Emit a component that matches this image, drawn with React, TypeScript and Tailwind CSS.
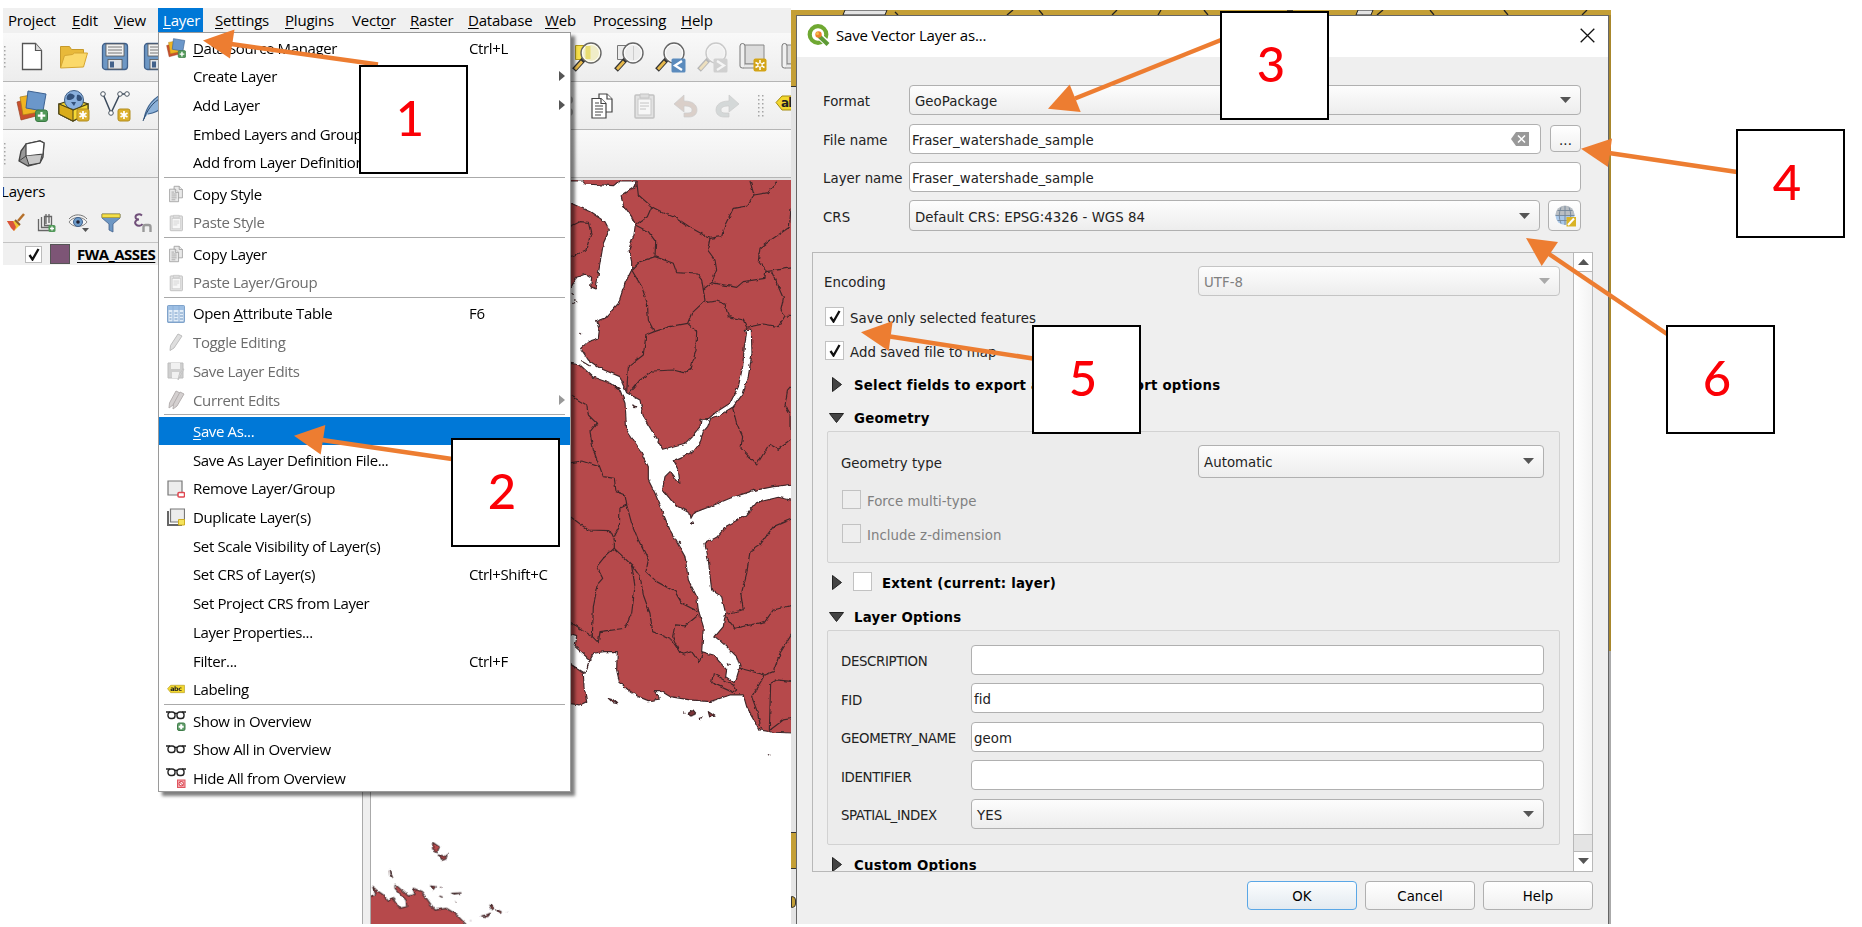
import React from "react";

type IconProps = { className?: string };

/* Text with an underlined mnemonic letter, marked by "&" */
function Mnemonic({ text }: { text: string }) {
  const i = text.indexOf("&");
  if (i < 0) return <>{text}</>;
  return (
    <>
      {text.slice(0, i)}
      <span className="underline decoration-1 underline-offset-2">{text[i + 1]}</span>
      {text.slice(i + 2)}
    </>
  );
}

/* ---------- icons ---------- */

const NewIcon = () => (
  <svg className="h-[30px] w-[30px]" viewBox="0 0 30 30">
    <path d="M5.500 1.500h13l6 7v19h-19z" fill="#fff" stroke="#555" strokeWidth="1.300" />
    <path d="M18.500 1.500v7h6" fill="#ddd" stroke="#555" strokeWidth="1.200" />
  </svg>
);
const FolderIcon = () => (
  <svg className="h-[30px] w-[30px]" viewBox="0 0 30 30">
    <path d="M1.500 26V4.500h9l2 3h12V12" fill="#e8b93a" stroke="#c79a2b" />
    <path d="M1.500 26l4-12.500 8-1 2-1.500h13L24.500 25z" fill="#fbd96a" stroke="#d5a632" />
  </svg>
);
const SaveIcon = () => (
  <svg className="h-[30px] w-[30px]" viewBox="0 0 30 30">
    <rect x="2.500" y="1.500" width="25" height="26" rx="3" fill="#6d97c4" stroke="#41618b" strokeWidth="1.300" />
    <rect x="6" y="2" width="18" height="12" fill="#f1f1f1" stroke="#555" strokeWidth=".8" />
    <path d="M8 5h14M8 8h14M8 11h14" stroke="#777" />
    <rect x="8" y="17.500" width="14" height="9.500" fill="#dfe3e8" stroke="#555" strokeWidth=".8" />
    <rect x="10" y="19.500" width="4" height="6" fill="#41618b" />
  </svg>
);
const SourceIcon = ({ className = "h-[32px] w-[32px]" }: IconProps) => (
  <svg className={className} viewBox="0 0 32 32">
    <path d="M1 12l15-4 4 18-15 4z" fill="#c9502e" stroke="#99401f" strokeWidth=".7" />
    <path d="M4 7l16-3 3 18-16 3z" fill="#f0b422" stroke="#a67b16" strokeWidth=".7" />
    <path d="M12 1l18 3-3 17-17-3z" fill="#6b97ca" stroke="#3d6292" />
    <rect x="19.500" y="20" width="12" height="11.500" rx="2.500" fill="#52995a" stroke="#397a42" />
    <path d="M25.500 22v7.500M21.800 25.700h7.500" stroke="#fff" strokeWidth="2.200" />
  </svg>
);
const YellowStar = ({ x, y }: { x: number; y: number }) => (
  <g transform={`translate(${x} ${y})`}>
    <rect width="12" height="12" rx="2" fill="#dcb02c" stroke="#b18d20" />
    <path d="M6 2v8M2.500 4l7 4M9.500 4l-7 4" stroke="#fff" strokeWidth="1.700" />
  </g>
);
const BoxIcon = () => (
  <svg className="h-[32px] w-[32px]" viewBox="0 0 32 32">
    <path d="M1 14l15-5 14 5v9l-15 8L1 24z" fill="#f3d22e" stroke="#4d4518" strokeWidth="1.200" />
    <circle cx="16" cy="10" r="9.500" fill="#8ab0dd" stroke="#3d5d85" />
    <path d="M9 6c3-4 5-2 7-1s-1 5-4 5-4 0-3-4zM19 5c3-1 5 2 5 4s-4 3-5 1 0-3 0-5zM13 12h5l-2 4z" fill="#33517a" />
    <path d="M1 14l14 6 15-6v9l-15 8L1 24z" fill="#f6d934" stroke="#4d4518" strokeWidth="1.200" />
    <path d="M1 14l14 6v11L1 24z" fill="#d9ac1b" stroke="#4d4518" />
    <YellowStar x={19} y={19} />
  </svg>
);
const VectorIcon = () => (
  <svg className="h-[32px] w-[32px]" viewBox="0 0 32 32">
    <path d="M4 4l8 19 9-19h8" fill="none" stroke="#3b4a5c" strokeWidth="1.500" />
    <g fill="#fff" stroke="#4a5560">
      <circle cx="4" cy="4" r="2.300" />
      <circle cx="12" cy="23" r="2.300" />
      <circle cx="21" cy="4" r="2.300" />
      <circle cx="28" cy="4" r="2.300" />
    </g>
    <YellowStar x={19} y={19} />
  </svg>
);
const FeatherIcon = () => (
  <svg className="h-[32px] w-[32px]" viewBox="0 0 32 32">
    <path d="M3 29C5 18 12 7 26 2c0 12-6 20-19 22" fill="#8db2d9" stroke="#3f648f" strokeWidth="1.200" />
    <path d="M2 31C6 20 12 12 20 8" fill="none" stroke="#2b4a6e" />
  </svg>
);
const MeshIcon = () => (
  <svg className="h-[28px] w-[28px]" viewBox="0 0 28 28">
    <path d="M9 4l14-3 4 2-1 14-3 6-12 3-9-5 2-10z" fill="#999" stroke="#444" strokeWidth="1.300" />
    <path d="M9 4l14-3 4 2-1 11-17 2z" fill="#fff" stroke="#444" strokeWidth="1.200" />
    <path d="M9 16l-7 5M9 16l3 9 11-2 2-8" fill="#c9c9c9" stroke="#444" />
  </svg>
);
type LensKind = "selection" | "layer" | "last" | "next";
const ZoomIcon = ({ kind }: { kind: LensKind }) => (
  <svg className={kind === "next" ? "h-[32px] w-[32px] opacity-30" : "h-[32px] w-[32px]"} viewBox="0 0 32 32">
    {kind === "selection" && <path d="M4.500 4.500h12v14h-12z" fill="#f7e04b" stroke="#b59d1c" />}
    {kind === "layer" && <path d="M4.500 4.500h12v14h-12z" fill="#ececec" stroke="#777" />}
    <path d="M13 18L3 29" stroke="#333" strokeWidth="5" />
    <path d="M11 20.500L4 28.200" stroke="#e7b94b" strokeWidth="2.800" />
    <circle cx="20" cy="12" r="10" fill={kind === "selection" ? "#f0edc8" : "#ededed"} stroke="#666" strokeWidth="1.400" />
    <circle cx="20" cy="12" r="8.500" fill="none" stroke="#fff" />
    {kind === "selection" && <path d="M17 5v13" stroke="#e8dc72" strokeWidth="5" />}
    {kind === "layer" && <path d="M20.500 5v14" stroke="#ccc" />}
    {(kind === "last" || kind === "next") && (
      <>
        <rect x="17.500" y="17.500" width="14" height="14" rx="1.500" fill={kind === "last" ? "#5b8bbd" : "#888"} />
        <path d={kind === "last" ? "M28 20l-7 4.500 7 4.500" : "M21 20l7 4.500-7 4.500"} fill="none" stroke="#fff" strokeWidth="2.300" />
      </>
    )}
  </svg>
);
const ScrollIcon = () => (
  <svg className="h-[32px] w-[32px]" viewBox="0 0 32 32">
    <path d="M6 4h21v19H6z" fill="#dcdcdc" stroke="#888" />
    <path d="M3 5q0-2.500 2.500-2.500T8 5v20q0 2-2.500 2T3 25z" fill="#f0f0f0" stroke="#777" />
    <path d="M6 27h18v-4H8" fill="#e8e8e8" stroke="#888" />
    <rect x="16.500" y="17.500" width="13" height="13" rx="2" fill="#d3a417" />
    <path d="M23 19v10M18.500 21.500l9 5M27.500 21.500l-9 5" stroke="#fff" strokeWidth="1.500" />
    <circle cx="23" cy="24" r="2.200" fill="#d3a417" stroke="#fff" />
  </svg>
);
const CutIcon = () => (
  <svg className="h-[28px] w-[28px]" viewBox="0 0 28 28">
    <g fill="none" stroke="#aaa" strokeWidth="2">
      <circle cx="22" cy="8" r="3" />
      <circle cx="22" cy="20" r="3" />
      <path d="M19 10L6 20M19 18L6 8" />
    </g>
  </svg>
);
const CopyIcon = ({ className = "h-[28px] w-[28px]", dim = false }: IconProps & { dim?: boolean }) => (
  <svg className={className} viewBox="0 0 28 28">
    <g fill={dim ? "#e9e9e9" : "#fff"} stroke={dim ? "#999" : "#444"} strokeWidth="1.200">
      <path d="M11 2h8l5 5v13H11z" />
      <path d="M19 2v5h5" />
      <path d="M4 6.500h9l5 5V26H4z" />
      <path d="M13 6.500v5h5M7 14h8M7 17h8M7 20h8M7 23h6M7 11h4" />
    </g>
  </svg>
);
const PasteIcon = ({ className = "h-[28px] w-[28px]" }: IconProps) => (
  <svg className={className} viewBox="0 0 28 28">
    <rect x="5" y="3" width="19" height="23" rx="1" fill="#e2e2e2" stroke="#c2c2c2" strokeWidth="1.500" />
    <rect x="8" y="7" width="13" height="16" fill="#f7f7f7" stroke="#c9c9c9" />
    <path d="M10 4V2h9v4h-9zM10 11h9M10 14h9M10 17h6" fill="#ddd" stroke="#c4c4c4" />
  </svg>
);
const UndoIcon = ({ flip = false }: { flip?: boolean }) => (
  <svg className={flip ? "h-[24px] w-[26px] -scale-x-100" : "h-[24px] w-[26px]"} viewBox="0 0 26 24">
    <path d="M1 10L11 1v6c9 0 13 4 13 9 0 4-3 7-8 7h-5v-4h4c3 0 4-1 4-3 0-3-3-4-8-4v6z" fill={flip ? "#d4d8d8" : "#dacfc9"} stroke="#ccc" strokeWidth=".7" />
  </svg>
);
const TagIcon = ({ className = "h-[20px] w-[34px]" }: IconProps) => (
  <svg className={className} viewBox="0 0 34 20">
    <path d="M1 8.500L7 2h26v14H7z" fill="#f3d82e" stroke="#a58b13" />
    <text x="6" y="13" fontSize="12" fontWeight="bold" fontFamily="DejaVu Sans" fill="#222" letterSpacing="-.8">
      abc
    </text>
  </svg>
);
const Grip = ({ double = false }: { double?: boolean }) => (
  <svg className="h-[24px] w-[8px]" viewBox="0 0 8 24">
    {[1, 5, 9, 13, 17, 21].map((y) => (
      <g key={y} fill="#a5a5a5">
        <rect x="1" y={y} width="1.500" height="1.500" />
        {double && <rect x="5" y={y} width="1.500" height="1.500" />}
      </g>
    ))}
  </svg>
);
const BrushIcon = () => (
  <svg className="h-[20px] w-[20px]" viewBox="0 0 20 20">
    <path d="M12 8l6-7" stroke="#b5702a" strokeWidth="2.500" />
    <path d="M1 8l8 0 5 4-6 6z" fill="#f2c531" />
    <path d="M1 8l4 7 3 3 2-4-3-6z" fill="#d9533b" />
    <path d="M9 7l5 5" stroke="#8a5a2b" strokeWidth="2" />
  </svg>
);
const GroupIcon = () => (
  <svg className="h-[20px] w-[20px]" viewBox="0 0 20 20">
    <path d="M1.500 6v11.500H12M4.500 4v10.500h9M7.500 3.500h7v9h-7zM9 1v10M12 1v9" fill="none" stroke="#666" strokeWidth="1.300" />
    <rect x="11.500" y="12" width="7" height="7" rx="1.500" fill="#52995a" />
    <path d="M15 13.500v4M13 15.500h4" stroke="#fff" strokeWidth="1.300" />
  </svg>
);
const EyeIcon = () => (
  <svg className="h-[20px] w-[22px]" viewBox="0 0 22 20">
    <path d="M1 9c4-6 14-6 18 0-4 6-14 6-18 0z" fill="#f4f4f4" stroke="#888" />
    <circle cx="10" cy="9" r="4.500" fill="#6d9bc9" stroke="#41618b" />
    <circle cx="10" cy="9" r="1.800" fill="#223" />
    <path d="M1 6c5-6 14-5 18 0" fill="none" stroke="#777" />
    <path d="M14 15h7l-3.500 4z" fill="#555" />
  </svg>
);
const FunnelIcon = () => (
  <svg className="h-[20px] w-[20px]" viewBox="0 0 20 20">
    <path d="M1 1h18v4l-7 6v8l-4-2v-6L1 5z" fill="#6d97c4" stroke="#41618b" strokeWidth=".8" />
    <path d="M1 1h18v3.500H1z" fill="#f3e04a" stroke="#b09a2a" strokeWidth=".8" />
  </svg>
);
const EpsilonIcon = () => (
  <svg className="h-[20px] w-[20px]" viewBox="0 0 20 20">
    <path d="M10 2.500C7 0 2 2 4 5.500c.5 1 2 1 3 1-3 0-5 3-3 5s5 1.500 6.500-.5" fill="none" stroke="#704f79" strokeWidth="2" />
    <path d="M11.500 19v-5q0-2 2-2h3q2 0 2 2v5" fill="none" stroke="#999" strokeWidth="2.400" />
  </svg>
);

const TableIcon = () => (
  <svg className="h-[18px] w-[18px]" viewBox="0 0 18 18">
    <rect x=".7" y=".7" width="16.600" height="16.600" rx="1" fill="#e2edf8" stroke="#7fa3cb" strokeWidth="1.400" />
    <path d="M1 1h16v4H1z" fill="#9dbfe4" />
    <path d="M6 1v16M12 1v16" stroke="#8fb1d8" />
    <path d="M2.500 8h2M2.500 11h2M2.500 14h2M7.500 8h3M7.500 11h3M7.500 14h3M13 8h3M13 11h3M13 14h3" stroke="#6f96c2" />
  </svg>
);
const PencilIcon = () => (
  <svg className="h-[18px] w-[18px]" viewBox="0 0 18 18">
    <path d="M11 1l4 2-8 12-4 2.500.5-5z" fill="#dedede" stroke="#bdbdbd" />
  </svg>
);
const PencilsIcon = () => (
  <svg className="h-[20px] w-[18px]" viewBox="0 0 18 20">
    <path d="M9 1l4 2-7 12-4 3 .5-5z" fill="#d4d0d0" stroke="#b5b0b0" />
    <path d="M13 2l4 2-7 12-4 3 .5-5z" fill="#d4d0d0" stroke="#b5b0b0" />
  </svg>
);
const SaveDimIcon = () => (
  <svg className="h-[18px] w-[18px]" viewBox="0 0 18 18">
    <path d="M1 1h15v15H1z" fill="#cfcfcf" stroke="#bdbdbd" />
    <path d="M4 1h9v6H4zM5 10h7v6H5z" fill="#f1f1f1" />
    <path d="M17 7l-6 11 1-5 4-6z" fill="#ddd" stroke="#bbb" strokeWidth=".7" />
  </svg>
);
const RemoveIcon = () => (
  <svg className="h-[18px] w-[18px]" viewBox="0 0 18 18">
    <path d="M1 1h14v14H1z" fill="#ececec" stroke="#777" strokeWidth="1.200" />
    <rect x="11" y="12.500" width="6.500" height="4.500" rx="1" fill="#fff" stroke="#df4650" strokeWidth="1.500" />
  </svg>
);
const DuplicateIcon = () => (
  <svg className="h-[18px] w-[18px]" viewBox="0 0 18 18">
    <path d="M1 3v14h14" fill="none" stroke="#666" strokeWidth="2" />
    <path d="M3.500 1h14v13h-14z" fill="#ececec" stroke="#777" strokeWidth="1.200" />
    <path d="M11.500 11.500h6v5.500h-6z" fill="#f5e35c" stroke="#cfae22" />
  </svg>
);
const GlassesIcon = ({ badge }: { badge?: "add" | "hide" }) => (
  <svg className={badge ? "h-[20px] w-[20px]" : "h-[9px] w-[20px]"} viewBox={badge ? "0 0 20 20" : "0 0 20 9"}>
    <path d="M0 1h4M16 1h4M9 3q1-1.500 2 0" fill="none" stroke="#222" strokeWidth="1.300" />
    <rect x="2" y="1" width="7" height="6.500" rx="2.800" fill="#fff" stroke="#222" strokeWidth="1.400" />
    <rect x="11" y="1" width="7" height="6.500" rx="2.800" fill="#fff" stroke="#222" strokeWidth="1.400" />
    {badge === "add" && (
      <>
        <rect x="11.500" y="12" width="7.500" height="7.500" rx="1.500" fill="#5f9c68" stroke="#3f7d49" />
        <path d="M15.200 13.200v5M12.700 15.700h5" stroke="#fff" strokeWidth="2" />
      </>
    )}
    {badge === "hide" && (
      <>
        <rect x="11.500" y="12" width="7.500" height="7.500" fill="#f4a9ae" stroke="#e0555f" />
        <circle cx="15.200" cy="15.700" r="2.200" fill="#fff" stroke="#d93a46" />
        <path d="M13.500 14l3.500 3.500" stroke="#d93a46" />
      </>
    )}
  </svg>
);

/* ---------- main window ---------- */

const menus: [string, string][] = [
  ["Pro&ject", "w-[64px]"],
  ["&Edit", "w-[42px]"],
  ["&View", "w-[44px]"],
  ["&Layer", "w-[57px]"],
  ["&Settings", "w-[70px]"],
  ["&Plugins", "w-[67px]"],
  ["Vect&or", "w-[58px]"],
  ["&Raster", "w-[58px]"],
  ["&Database", "w-[77px]"],
  ["&Web", "w-[48px]"],
  ["Pro&cessing", "w-[88px]"],
  ["&Help", "w-[40px]"],
];

function MenuBar() {
  return (
    <div className="flex h-[25px] items-center bg-[#f0f0f0] pl-[5px] text-[15px] tracking-[-0.2px] text-black">
      {menus.map(([label, width]) =>
        label === "&Layer" ? (
          <div key={label} className={width}>
            <div className="flex h-[25px] w-[45px] items-center bg-[#0078d7] pl-[5px] text-white">
              <span className="whitespace-nowrap">
                <Mnemonic text={label} />
              </span>
            </div>
          </div>
        ) : (
          <div key={label} className={width + " whitespace-nowrap"}>
            <Mnemonic text={label} />
          </div>
        )
      )}
    </div>
  );
}

const bar = "flex shrink-0 items-center overflow-hidden border-b border-[#b5b5b5] bg-linear-to-b from-[#f9f9f9] to-[#ededed]";

function Toolbars() {
  return (
    <>
      <div className={bar + " h-[49px]"}>
        <div className="flex w-[568px] shrink-0 items-center overflow-hidden">
          <Grip />
          <div className="ml-[6px] flex gap-[11.5px]">
            <NewIcon />
            <FolderIcon />
            <SaveIcon />
            <SaveIcon />
          </div>
        </div>
        <div className="flex shrink-0 gap-[9.5px]">
          <ZoomIcon kind="selection" />
          <ZoomIcon kind="layer" />
          <ZoomIcon kind="last" />
          <ZoomIcon kind="next" />
          <ScrollIcon />
          <ScrollIcon />
        </div>
      </div>
      <div className={bar + " h-[48px]"}>
        <div className="flex w-[544px] shrink-0 items-center overflow-hidden">
          <Grip />
          <div className="ml-[5px] flex gap-[9.5px]">
            <SourceIcon />
            <BoxIcon />
            <VectorIcon />
            <FeatherIcon />
          </div>
        </div>
        <div className="flex shrink-0 items-center gap-[13.3px]">
          <CutIcon />
          <CopyIcon />
          <PasteIcon />
          <span className="ml-[2px]">
            <UndoIcon />
          </span>
          <span className="ml-[2px]">
            <UndoIcon flip />
          </span>
          <span className="ml-[4px]">
            <Grip double />
          </span>
          <span className="-mt-[3px] -ml-[4px]">
            <TagIcon />
          </span>
        </div>
      </div>
      <div className={bar + " h-[48px]"}>
        <Grip />
        <div className="ml-[6px]">
          <MeshIcon />
        </div>
      </div>
    </>
  );
}

function LayersPanel() {
  return (
    <div className="flex w-[359px] shrink-0 flex-col">
      <div className="flex h-[28px] items-center bg-[#f0f0f0] pb-[2px] text-[15px] tracking-[-0.2px]">
        <span className="-ml-[2px]">Layers</span>
      </div>
      <div className="flex h-[37px] items-center gap-[11px] border-b border-[#c4c4c4] bg-[#f0f0f0] pb-[2px] pl-[3px]">
        <BrushIcon />
        <GroupIcon />
        <EyeIcon />
        <FunnelIcon />
        <EpsilonIcon />
      </div>
      <div className="flex h-[22px] items-center bg-[#f0f0f0] pl-[22px]">
        <div className="flex size-[17px] items-center justify-center border border-[#bbb] bg-white">
          <CheckMark />
        </div>
        <div className="ml-[8px] size-[20px] border border-[#555] bg-[#7d5576]" />
        <span className="ml-[7px] text-[15px] font-bold tracking-[-0.5px] underline underline-offset-2">FWA_ASSES</span>
      </div>
    </div>
  );
}

function CheckMark() {
  return (
    <svg className="h-[13px] w-[12px]" viewBox="0 0 12 13">
      <path d="M1.500 7l3 4.500L10.500 1" fill="none" stroke="#111" strokeWidth="2.300" />
    </svg>
  );
}

const basins = [
  "230,33 235,75 275,110 310,128 350,145 395,175 450,205 485,200 495,165 520,115 560,108 582,75 570,33",
  "582,75 625,68 650,33",
  "275,110 262,140 226,165 265,185 287,215 285,260 240,275 215,300",
  "285,260 340,280 350,308 410,312 425,330 430,358",
  "450,205 443,240 465,270 470,300 455,338 430,358 435,392 395,430 383,460 410,485 408,540 393,595 370,608 340,600 280,603 240,630 207,670",
  "455,338 530,352 550,335 615,325 618,300 595,270 600,235 640,205 688,172 693,115",
  "618,305 700,293",
  "635,305 655,350 670,385 663,420 675,438 700,440",
  "675,438 655,470 610,462 560,472 550,450 505,440 495,402 470,393 435,398",
  "215,300 245,350 262,400 265,450 283,485 330,470 383,460",
  "283,485 258,495 250,555 205,590 200,665",
  "517,710 530,760 548,800 543,835 590,885 628,822 655,838 700,805",
  "700,640 683,660 675,705 690,730 690,780",
  "20,670 80,705 85,735 110,760 90,785 100,840 117,885 130,920 163,925 168,965 195,975 200,1005 180,1015 178,1070 163,1100",
  "20,880 65,873 117,890",
  "200,1005 215,1060 235,1110 265,1170 258,1205 290,1235 345,1265 365,1300 415,1325",
  "20,1032 85,1080 150,1082 163,1110 163,1135 215,1185 240,1220 250,1275 270,1330 278,1385 335,1410 355,1440 370,1453 395,1445 418,1478 428,1445",
  "163,1135 130,1165 110,1190 128,1225 115,1240 100,1310 97,1400 115,1418 120,1385 195,1375 215,1330 225,1250 215,1185",
  "415,1335 375,1368 345,1365 338,1400 360,1450",
  "20,175 60,155 85,157 93,190 78,240 20,265",
  "700,1045 640,1070 600,1125 570,1145 560,1210 543,1275 550,1320 500,1330",
  "497,1340 525,1375 615,1355 640,1320 700,1305",
  "540,1495 615,1515 640,1505 660,1450 700,1385",
  "615,1515 575,1580 590,1620 605,1680",
  "700,1535 650,1530 632,1540 628,1685",
  "630,1680 670,1650 700,1645",
  "460,1510 520,1545 530,1560 520,1568 455,1538 460,1510",
  "20,1350 60,1375 97,1400",
];

const inlet =
  "M20 33H68L75 42L160 47L178 33H232L225 50L183 78L190 105L215 140L226 165L222 195L207 240L215 275L215 300L195 340L175 400L135 445L110 455L118 480L115 505L85 515L62 535L85 570L120 595L180 620L187 640L200 668L240 690L250 740L280 790L308 838L375 820L395 800L420 770L423 748L447 745L470 725L510 700L535 650L548 590L553 530L560 490L556 478H574L576 550L565 620L550 670L520 710L480 735L452 746L443 770L430 785L420 820L400 845L340 872L355 900L360 940L345 925L330 905L315 920L308 960L345 1005L390 1030L393 1045L402 1028L455 1008L510 985L580 962L640 950L700 942V992L655 982L590 998L560 1035L500 1068L470 1102L435 1120L445 1170L455 1260L485 1280L497 1330L490 1370L465 1400L500 1430L530 1460L540 1490L525 1540L497 1520L500 1500L460 1455L425 1445L430 1370L415 1320L410 1280L385 1230L375 1160L330 1080L305 1020L285 970L265 930L265 890L240 840L200 780L195 700L180 660L150 640L100 622L60 585L20 578V350H34L50 322L75 313L95 325L92 350L108 357L115 310L130 220L148 180L135 155L90 125L20 94Z";

function MapCanvas() {
  return (
    <svg className="block h-[744px] w-[420px] bg-white" viewBox="371 180 420 744">
      <defs>
        <filter id="rough" x="-5%" y="-5%" width="110%" height="110%">
          <feTurbulence type="fractalNoise" baseFrequency="0.18" numOctaves="2" seed="4" result="n" />
          <feDisplacementMap in="SourceGraphic" in2="n" scale="3.500" xChannelSelector="R" yChannelSelector="G" />
        </filter>
      </defs>
      <g filter="url(#rough)" strokeLinejoin="round">
        <g transform="translate(560 170) scale(.3333)" stroke="#40282a" strokeWidth="3.500">
          <path
            d="M-20 -20H720V1690L640 1687L598 1680L580 1645L560 1610L550 1575H510L450 1595L390 1590L330 1580L300 1562H283L298 1588L265 1592L235 1580L205 1560L178 1535L170 1500L172 1445H135L100 1450L85 1475L60 1465L50 1440L20 1400H-20Z"
            fill="#b6484b"
          />
          <path d="M20 1390L50 1400L45 1430L90 1470L75 1510L20 1475Z" fill="#fff" />
          <path d="M20 1475L70 1510L72 1550L80 1595L60 1605L20 1600Z" fill="#b6484b" />
          {basins.map((p) => (
            <polyline key={p} points={p} fill="none" />
          ))}
          <path d={inlet} fill="#fff" />
          <g fill="#7d3438">
            <path d="M145 1585l14 4 14 12-14-3zM385 1630l14-10 10 12-18 6zM445 1625l20 14-16 2zM418 1645l8-2-4 6zM372 1625l3 2zM394 1055l6 2-4 3zM358 1117l4 2-3 3zM502 1481l6 2-4 3zM625 1753l5 2zM36 370l4 4zM44 392l6 3zM62 490l3 2zM38 400l3 2zM160 645l14 8 8 8-10-4zM218 705l12 5-5 3zM68 575l20 12z" />
          </g>
        </g>
        <g transform="translate(350 780) scale(.3333)" fill="#b6484b" stroke="#40282a" strokeWidth="3.500">
          <path d="M40 460V350H64L78 340L68 322L100 345L115 364L130 355L150 385L170 380L168 360L135 325V313L175 348L195 343L190 325L215 335L240 370L255 390L290 385L315 400L345 430L370 460Z" />
          <path d="M248 187l20 14-6 14-14-8zM265 225l16 6 10-8-4 14-12 4zM118 270l10 24-8-8zM242 318l14 2-6 8zM420 375l14 8-8 6zM440 388l14 8-8 4zM305 340l28-1-22 3zM395 408l18 2 8-10-10 4zM272 320v4M268 348l10 4M318 364v3M362 421v2M470 395v1" />
        </g>
      </g>
    </svg>
  );
}

function MainWindow() {
  return (
    <div className="ml-[3px] flex h-[916px] w-[788px] shrink-0 flex-col overflow-hidden font-['Open_Sans',sans-serif]">
      <MenuBar />
      <Toolbars />
      <div className="flex min-h-0 flex-1">
        <LayersPanel />
        <div className="w-[9px] shrink-0 border-x border-[#aaa] bg-[#efefef]" />
        <div className="border-t-2 border-[#e3e3e3]">
          <MapCanvas />
        </div>
      </div>
    </div>
  );
}

/* ---------- drop-down menu ---------- */

type Item = { label: string; icon?: React.ReactNode; keys?: string; off?: boolean; sub?: boolean; on?: boolean };

const small = "h-[20px] w-[18px]";
const groups: Item[][] = [
  [
    { label: "&Data Source Manager", icon: <SourceIcon className="h-[20px] w-[20px]" />, keys: "Ctrl+L" },
    { label: "Create Layer", sub: true },
    { label: "Add Layer", sub: true },
    { label: "Embed Layers and Groups..." },
    { label: "Add from Layer Definition File..." },
  ],
  [
    { label: "Copy Style", icon: <CopyIcon className={small} dim /> },
    { label: "Paste Style", icon: <PasteIcon className={small} />, off: true },
  ],
  [
    { label: "Copy Layer", icon: <CopyIcon className={small} dim /> },
    { label: "Paste Layer/Group", icon: <PasteIcon className={small} />, off: true },
  ],
  [
    { label: "Open &Attribute Table", icon: <TableIcon />, keys: "F6" },
    { label: "Toggle Editing", icon: <PencilIcon />, off: true },
    { label: "Save Layer Edits", icon: <SaveDimIcon />, off: true },
    { label: "Current Edits", icon: <PencilsIcon />, off: true, sub: true },
  ],
  [
    { label: "&Save As...", on: true },
    { label: "Save As Layer Definition File..." },
    { label: "Remove Layer/Group", icon: <RemoveIcon /> },
    { label: "Duplicate Layer(s)", icon: <DuplicateIcon /> },
    { label: "Set Scale Visibility of Layer(s)" },
    { label: "Set CRS of Layer(s)", keys: "Ctrl+Shift+C" },
    { label: "Set Project CRS from Layer" },
    { label: "Layer &Properties..." },
    { label: "Filter...", keys: "Ctrl+F" },
    { label: "Labeling", icon: <TagIcon className="h-[11px] w-[18px]" /> },
  ],
  [
    { label: "Show in Overview", icon: <GlassesIcon badge="add" /> },
    { label: "Show All in Overview", icon: <GlassesIcon /> },
    { label: "Hide All from Overview", icon: <GlassesIcon badge="hide" /> },
  ],
];

function MenuRow({ item }: { item: Item }) {
  const tone = item.on ? "bg-[#0078d7] text-white" : item.off ? "text-[#6d6d6d]" : "text-black";
  return (
    <div className={"flex h-[28.73px] items-center whitespace-nowrap " + tone}>
      <div className="flex w-[34px] shrink-0 items-center justify-center">{item.icon}</div>
      <div className="w-[276px] shrink-0">
        <span className="inline-block">
          <Mnemonic text={item.label} />
        </span>
      </div>
      <div className="flex-1">{item.keys}</div>
      {item.sub && (
        <svg className="mr-[5px] h-[10px] w-[6px]" viewBox="0 0 6 10">
          <path d="M0 0l6 5-6 5z" fill={item.off ? "#999" : "#555"} />
        </svg>
      )}
    </div>
  );
}

function LayerMenu() {
  return (
    <div className="absolute top-[32.4px] left-[158px] h-[760px] w-[413px] border border-[#9a9a9a] bg-white font-['Open_Sans',sans-serif] text-[15px] tracking-[-0.36px] shadow-[4px_4px_3px_rgba(0,0,0,0.5)]">
      {groups.map((g, i) => (
        <div key={i}>
          {i > 0 && (
            <div className="h-[2.5px] px-[5px]">
              <div className="h-px bg-[#aaa]" />
            </div>
          )}
          {g.map((item) => (
            <MenuRow key={item.label} item={item} />
          ))}
        </div>
      ))}
    </div>
  );
}

/* ---------- dialog ---------- */

const frame = "rounded-[4px] border-[1.5px] border-[#b0b0b0]";

function Arrow({ className = "" }: IconProps) {
  return (
    <svg className={"h-[6px] w-[11px] " + className} viewBox="0 0 11 6">
      <path d="M0 0h11L5.500 6z" fill="currentColor" />
    </svg>
  );
}

function Combo({ value, className, off = false }: { value: string; className: string; off?: boolean }) {
  return (
    <div
      className={
        "flex items-center justify-between bg-linear-to-b from-[#fdfdfd] to-[#ededed] pr-[9px] pl-[5px] " +
        (off ? "rounded-[4px] border border-[#c4c4c4] text-[#808080] " : frame + " text-[#222] ") +
        className
      }
    >
      <span className="pt-[2px] whitespace-nowrap">{value}</span>
      <Arrow className={off ? "text-[#aaa]" : "text-[#555]"} />
    </div>
  );
}

function Input({ value = "", className, children }: { value?: string; className: string; children?: React.ReactNode }) {
  return (
    <div className={frame + " flex items-center justify-between bg-white pl-[2px] text-[#222] " + className}>
      <span className="pt-[2px] whitespace-nowrap">{value}</span>
      {children}
    </div>
  );
}

function Check({ on = false, off = false }: { on?: boolean; off?: boolean }) {
  return (
    <div
      className={
        "flex size-[19px] shrink-0 items-center justify-center border-[1.5px] border-[#c2c2c2] " + (off ? "bg-[#eee]" : "bg-white")
      }
    >
      {on && <CheckMark />}
    </div>
  );
}

function Section({ title, open = false, className, children }: { title: string; open?: boolean; className: string; children?: React.ReactNode }) {
  return (
    <div className={"flex h-[24px] items-center font-bold tracking-[0.25px] text-black " + className}>
      <div className="flex w-[41px] shrink-0 items-center pl-[16px]">
        {open ? (
          <svg className="mt-[3px] h-[10px] w-[15px]" viewBox="0 0 15 10">
            <path d="M.5.500h14l-7 9z" fill="#444" stroke="#222" />
          </svg>
        ) : (
          <svg className="mt-[2px] ml-[3px] h-[15px] w-[10px]" viewBox="0 0 10 15">
            <path d="M.5.500l9 7-9 7z" fill="#444" stroke="#222" />
          </svg>
        )}
      </div>
      {children}
      <span className="pt-[2px] whitespace-nowrap">{title}</span>
    </div>
  );
}

function FormRow({ label, children }: { label: string; children: React.ReactNode }) {
  return (
    <div className="mb-[8.6px] flex h-[30px] items-center">
      <div className="w-[86px] shrink-0 pt-[2px] whitespace-nowrap">{label}</div>
      {children}
    </div>
  );
}

const layerOptions: [string, string][] = [
  ["DESCRIPTION", ""],
  ["FID", "fid"],
  ["GEOMETRY_NAME", "geom"],
  ["IDENTIFIER", ""],
];

function ScrollArea() {
  return (
    <div className="mt-[12.6px] ml-[15px] flex h-[620px] w-[781px] overflow-hidden border border-[#b8b8b8]">
      <div className="w-[760px] shrink-0">
        <div className="mt-[13px] flex h-[30px] items-center">
          <span className="w-[385px] pt-[2px] pl-[11px]">Encoding</span>
          <Combo value="UTF-8" off className="h-[30px] w-[362px]" />
        </div>
        <div className="mt-[11px] flex h-[19px] items-center gap-[6px] pl-[12px]">
          <Check on />
          <span className="pt-[3px]">Save only selected features</span>
        </div>
        <div className="mt-[15px] flex h-[19px] items-center gap-[6px] pl-[12px]">
          <Check on />
          <span className="pt-[4px]">Add saved file to map</span>
        </div>
        <Section title="Select fields to export and their export options" className="mt-[12px]" />
        <Section title="Geometry" open className="mt-[9px]" />
        <div className="mt-[2px] ml-[14px] h-[132px] w-[733px] rounded-[2px] border border-[#d2d2d2] bg-[#ececec] pt-[13px]">
          <div className="flex h-[33px] items-center">
            <span className="w-[370px] pt-[4px] pl-[13px]">Geometry type</span>
            <Combo value="Automatic" className="h-[33px] w-[346px]" />
          </div>
          <div className="mt-[12px] flex h-[19px] items-center gap-[6px] pl-[14px] text-[#808080]">
            <Check off />
            <span className="pt-[4px]">Force multi-type</span>
          </div>
          <div className="mt-[15px] flex h-[19px] items-center gap-[6px] pl-[14px] text-[#808080]">
            <Check off />
            <span className="pt-[4px]">Include z-dimension</span>
          </div>
        </div>
        <Section title="Extent (current: layer)" className="mt-[7px]">
          <div className="mr-[10px] -ml-px">
            <Check />
          </div>
        </Section>
        <Section title="Layer Options" open className="mt-[10px]" />
        <div className="mt-[2px] ml-[14px] h-[215px] w-[733px] rounded-[2px] border border-[#d2d2d2] bg-[#ececec] pt-[14px]">
          {layerOptions.map(([k, v]) => (
            <div key={k} className="mb-[8.5px] flex h-[30px] items-center">
              <span className="w-[143px] pt-[3px] pl-[13px] tracking-[-0.35px]">{k}</span>
              <Input value={v} className="h-[30px] w-[573px]" />
            </div>
          ))}
          <div className="flex h-[30px] items-center">
            <span className="w-[143px] pt-[3px] pl-[13px] tracking-[-0.35px]">SPATIAL_INDEX</span>
            <Combo value="YES" className="h-[30px] w-[573px]" />
          </div>
        </div>
        <Section title="Custom Options" className="mt-[7px]" />
      </div>
      <div className="flex flex-1 flex-col border-l border-[#b8b8b8]">
        <div className="flex h-[19px] items-center justify-center border-b border-[#b8b8b8] bg-white">
          <Arrow className="rotate-180 text-[#555]" />
        </div>
        <div className="flex-1 bg-linear-to-r from-white to-[#f3f3f3]" />
        <div className="h-[18px] border-y border-[#b8b8b8] bg-[#e4e4e4]" />
        <div className="flex h-[19px] items-center justify-center bg-white">
          <Arrow className="text-[#555]" />
        </div>
      </div>
    </div>
  );
}

function Dialog() {
  return (
    <div className="flex h-[909px] w-[813px] flex-col border-x border-t border-[#666] bg-[#efefef] font-['DejaVu_Sans_Condensed','DejaVu_Sans',sans-serif] text-[14.8px] tracking-[0.05px] text-[#222] [font-stretch:condensed]">
      <div className="flex h-[41px] shrink-0 items-center bg-white pb-[3px] pl-[10px]">
        <svg className="h-[22px] w-[23px]" viewBox="0 0 23 22">
          <circle cx="11" cy="10.500" r="8.300" fill="none" stroke="#6fa832" strokeWidth="4.200" />
          <path d="M10 10l11 10" stroke="#fff" strokeWidth="6.500" />
          <path d="M12 12l9 8.500" stroke="#5d9a35" strokeWidth="4.200" />
          <circle cx="11.500" cy="10.500" r="3.200" fill="#ee7f2d" />
          <circle cx="10.500" cy="9.500" r="1.500" fill="#f5c04a" />
        </svg>
        <span className="ml-[6px] font-['Open_Sans',sans-serif] text-[15px] tracking-[-0.2px] text-black [font-stretch:normal]">Save Vector Layer as...</span>
        <svg className="mr-[13px] ml-auto h-[15px] w-[15px]" viewBox="0 0 15 15">
          <path d="M.7.700l13.600 13.600M14.300.700L.7 14.300" stroke="#111" strokeWidth="1.300" />
        </svg>
      </div>
      <div className="pt-[28px] pl-[26px]">
        <FormRow label="Format">
          <Combo value="GeoPackage" className="h-[30px] w-[672px]" />
        </FormRow>
        <FormRow label="File name">
          <Input value="Fraser_watershade_sample" className="h-[30px] w-[632px] pr-[11px]">
            <svg className="h-[14px] w-[18px]" viewBox="0 0 18 14">
              <path d="M0 7l5-7h13v14H5z" fill="#999" />
              <path d="M7 3.500l7 7M14 3.500l-7 7" stroke="#fff" strokeWidth="1.500" />
            </svg>
          </Input>
          <div className={frame + " ml-[9px] flex h-[27px] w-[31px] items-center justify-center bg-linear-to-b from-white to-[#f0f0f0] pt-[3px]"}>
            ...
          </div>
        </FormRow>
        <FormRow label="Layer name">
          <Input value="Fraser_watershade_sample" className="h-[30px] w-[672px]" />
        </FormRow>
        <FormRow label="CRS">
          <Combo value="Default CRS: EPSG:4326 - WGS 84" className="h-[31px] w-[631px]" />
          <div className={frame + " ml-[8px] flex h-[31px] w-[33px] items-center justify-center bg-linear-to-b from-white to-[#f3f3f3]"}>
            <svg className="h-[22px] w-[22px]" viewBox="0 0 22 22">
              <circle cx="11" cy="10.500" r="9.500" fill="#a9c8ea" />
              <path d="M1.500 10a9.500 9.500 0 0 1 19 0z" fill="#b9bec3" />
              <path d="M11 1v19M1.500 10.500h19M3.500 5.500h15M3.500 15.500h15M7 2.500q-3.500 8 0 16M15 2.500q3.500 8 0 16" fill="none" stroke="#758699" strokeWidth=".9" />
              <rect x="12.500" y="12" width="9.500" height="9.500" fill="#d9b326" />
              <path d="M14 20l6-6.500" stroke="#fff" strokeWidth="2" />
            </svg>
          </div>
        </FormRow>
      </div>
      <ScrollArea />
      <div className="mt-[9px] mr-[15px] flex justify-end gap-[8px] text-black">
        <div className="flex h-[29px] w-[110px] items-center justify-center rounded-[4px] border-[1.5px] border-[#5aa7e6] bg-linear-to-b from-[#fbfdfe] to-[#e3eaf0] pt-[2px]">
          OK
        </div>
        {["Cancel", "Help"].map((t) => (
          <div key={t} className={frame + " flex h-[29px] w-[110px] items-center justify-center bg-linear-to-b from-white to-[#f0f0f0] pt-[2px]"}>
            {t}
          </div>
        ))}
      </div>
    </div>
  );
}

function DialogWindow() {
  return (
    <div className="mt-[2px] h-[914px] w-[820px] shrink-0">
      <svg className="block h-[5px] w-[820px] bg-[#c49f36]" viewBox="0 0 820 5">
        <path d="M54 0h42l-2 5H52zM567 0h15l-2 5h-15z" fill="#e4e4e4" stroke="#222" />
        <path d="M104 2l3 3M222 0l-6 5M248 0l4 5M326 0l-5 5M370 0l-3 5M413 0l4 5M496 0h6M592 0l-6 5M639 0l4 5M713 0l4 5M796 0l-5 5" stroke="#222" strokeWidth="1.300" />
      </svg>
      <div className="flex h-[909px]">
        <div className="flex w-[5px] shrink-0 flex-col">
          <div className="h-[71px] bg-[#c49f36]" />
          <div className="h-px bg-[#333]" />
          <div className="flex-1 bg-[#e4e4e4]" />
          <div className="h-[37px] border-y border-[#333] bg-[#c49f36]" />
          <div className="h-[27px] bg-[#e6e6e6]" />
          <div className="h-[12px] rounded-r-sm border border-[#333] bg-[#c49f36]" />
          <div className="h-[16px] bg-[#e4e4e4]" />
        </div>
        <Dialog />
        <div className="flex w-[2px] shrink-0 flex-col">
          <div className="h-[636px] bg-[#a8872c]" />
          <div className="flex-1 bg-[#aaa]" />
        </div>
      </div>
    </div>
  );
}

/* ---------- annotations ---------- */

const callouts: [string, string][] = [
  ["1", "left-[359px] top-[65px]"],
  ["2", "left-[451px] top-[438px]"],
  ["3", "left-[1220px] top-[11px]"],
  ["4", "left-[1736px] top-[129px]"],
  ["5", "left-[1032px] top-[325px]"],
  ["6", "left-[1666px] top-[325px]"],
];

const arrows: [string, string][] = [
  ["203,40.5 234.500,29.500 230,58.500", "M231 44L378 64.500"],
  ["294,435.700 325.300,425 320.700,454.500", "M322 440L452 459"],
  ["1048,108.700 1069.700,84.500 1080.700,112", "M1075 98.500L1221 40"],
  ["1581,148.700 1612,138.500 1608,167", "M1609 153L1737 172"],
  ["861,332.300 892.700,321 888.700,351", "M890 336.500L1033 358.500"],
  ["1526,238 1558,242 1541.700,266", "M1549 254L1667 334"],
];

function Annotations() {
  return (
    <>
      <svg className="pointer-events-none absolute top-0 left-0 h-[927px] w-[1862px]" viewBox="0 0 1862 927">
        {arrows.map(([head, shaft]) => (
          <g key={head}>
            <path d={shaft} stroke="#ed7d31" strokeWidth="4.500" />
            <polygon points={head} fill="#ed7d31" />
          </g>
        ))}
      </svg>
      {callouts.map(([n, place]) => (
        <div
          key={n}
          className={
            "absolute flex size-[109px] items-center justify-center border-2 border-black bg-white pr-[7px] pb-[5px] font-['Lato',sans-serif] text-[49px] leading-none font-medium text-[#fb0006] " +
            place
          }
        >
          {n}
        </div>
      ))}
    </>
  );
}

export default function App() {
  return (
    <div className="relative flex h-[927px] w-[1862px] overflow-hidden bg-white pt-[8px]">
      <MainWindow />
      <DialogWindow />
      <LayerMenu />
      <Annotations />
    </div>
  );
}
